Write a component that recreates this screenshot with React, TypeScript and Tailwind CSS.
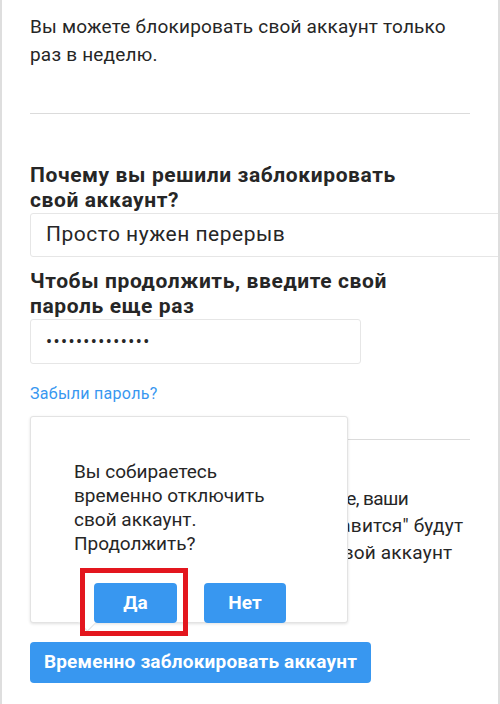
const font = { fontFamily: "Roboto, 'Noto Sans', sans-serif" };

export default function App() {
  return (
    <div
      style={font}
      className="relative w-[500px] h-[704px] overflow-hidden bg-white border-x-2 border-[#dedede] text-[#262626]"
    >
      <div className="pl-[28px] w-[468px]">
        <p className="pt-[13px] text-[19px] leading-[28px] tracking-[0.2px] whitespace-nowrap">
          Вы можете блокировать свой аккаунт только
          <br />
          раз в неделю.
        </p>

        <div className="mt-[44px] h-px bg-[#dbdbdb]" />

        <h2 className="mt-[49px] text-[21px] leading-[25px] tracking-[0.6px] font-bold whitespace-nowrap">
          Почему вы решили заблокировать
          <br />
          свой аккаунт?
        </h2>
        <div className="w-[490px] h-[44px] flex items-center pl-[15px] border border-[#e6e6e6] rounded-[3px] text-[21px] tracking-[0.5px]">
          Просто нужен перерыв
        </div>

        <h2 className="mt-[12px] text-[21px] leading-[25px] tracking-[0.6px] font-bold whitespace-nowrap">
          Чтобы продолжить, введите свой
          <br />
          пароль еще раз
        </h2>
        <div className="w-[331px] h-[45px] flex items-center pl-[15px] border border-[#e6e6e6] rounded-[3px] text-[18px] tracking-[1.4px]">
          ••••••••••••••
        </div>

        <a className="block mt-[20px] text-[16px] leading-[20px] tracking-[0.3px] text-[#3897f0]">Забыли пароль?</a>

        <div className="mt-[35px] h-px bg-[#dbdbdb]" />

        <p className="mt-[45px] text-[19px] leading-[27px] tracking-[0.2px] whitespace-nowrap">
          <span className="tracking-[-0.6px]">Учтите же: при временной блокировке, ваши</span>
          <br />
          фото, комментарии и отметки "Нравится" будут
          <br />
          скрыты, пока вы не активируете свой аккаунт
          <br />
          снова выполнив вход.
        </p>

        <button className="mt-[49px] w-[341px] h-[41px] rounded-[4px] bg-[#3897f0] text-white text-[19px] tracking-[0.2px] font-bold">
          Временно заблокировать аккаунт
        </button>
      </div>

      {/* confirmation popover */}
      <div className="absolute left-[28px] top-[416px] w-[318px] h-[207px] bg-white border border-[#e3e3e3] rounded-[3px] shadow-[0_1px_3px_rgba(0,0,0,0.12)]">
        <div className="absolute left-[50px] -bottom-[7px] w-[13px] h-[13px] rotate-45 bg-white border-r border-b border-[#e3e3e3]" />
        <div className="relative pt-[43px] pl-[43px]">
          <p className="text-[19px] leading-[24px]">
            Вы собираетесь
            <br />
            временно отключить
            <br />
            свой аккаунт.
            <br />
            Продолжить?
          </p>
          <div className="mt-[27px] flex gap-[27px] pl-[20px]">
            <button className="w-[83px] h-[40px] rounded-[4px] bg-[#3897f0] text-white text-[19px] font-bold">
              Да
            </button>
            <button className="w-[82px] h-[40px] rounded-[4px] bg-[#3897f0] text-white text-[19px] font-bold">
              Нет
            </button>
          </div>
        </div>
      </div>

      {/* highlight frame */}
      <div className="absolute left-[78px] top-[568px] w-[108px] h-[68px] border-[5px] border-[#e3161e]" />
    </div>
  );
}
